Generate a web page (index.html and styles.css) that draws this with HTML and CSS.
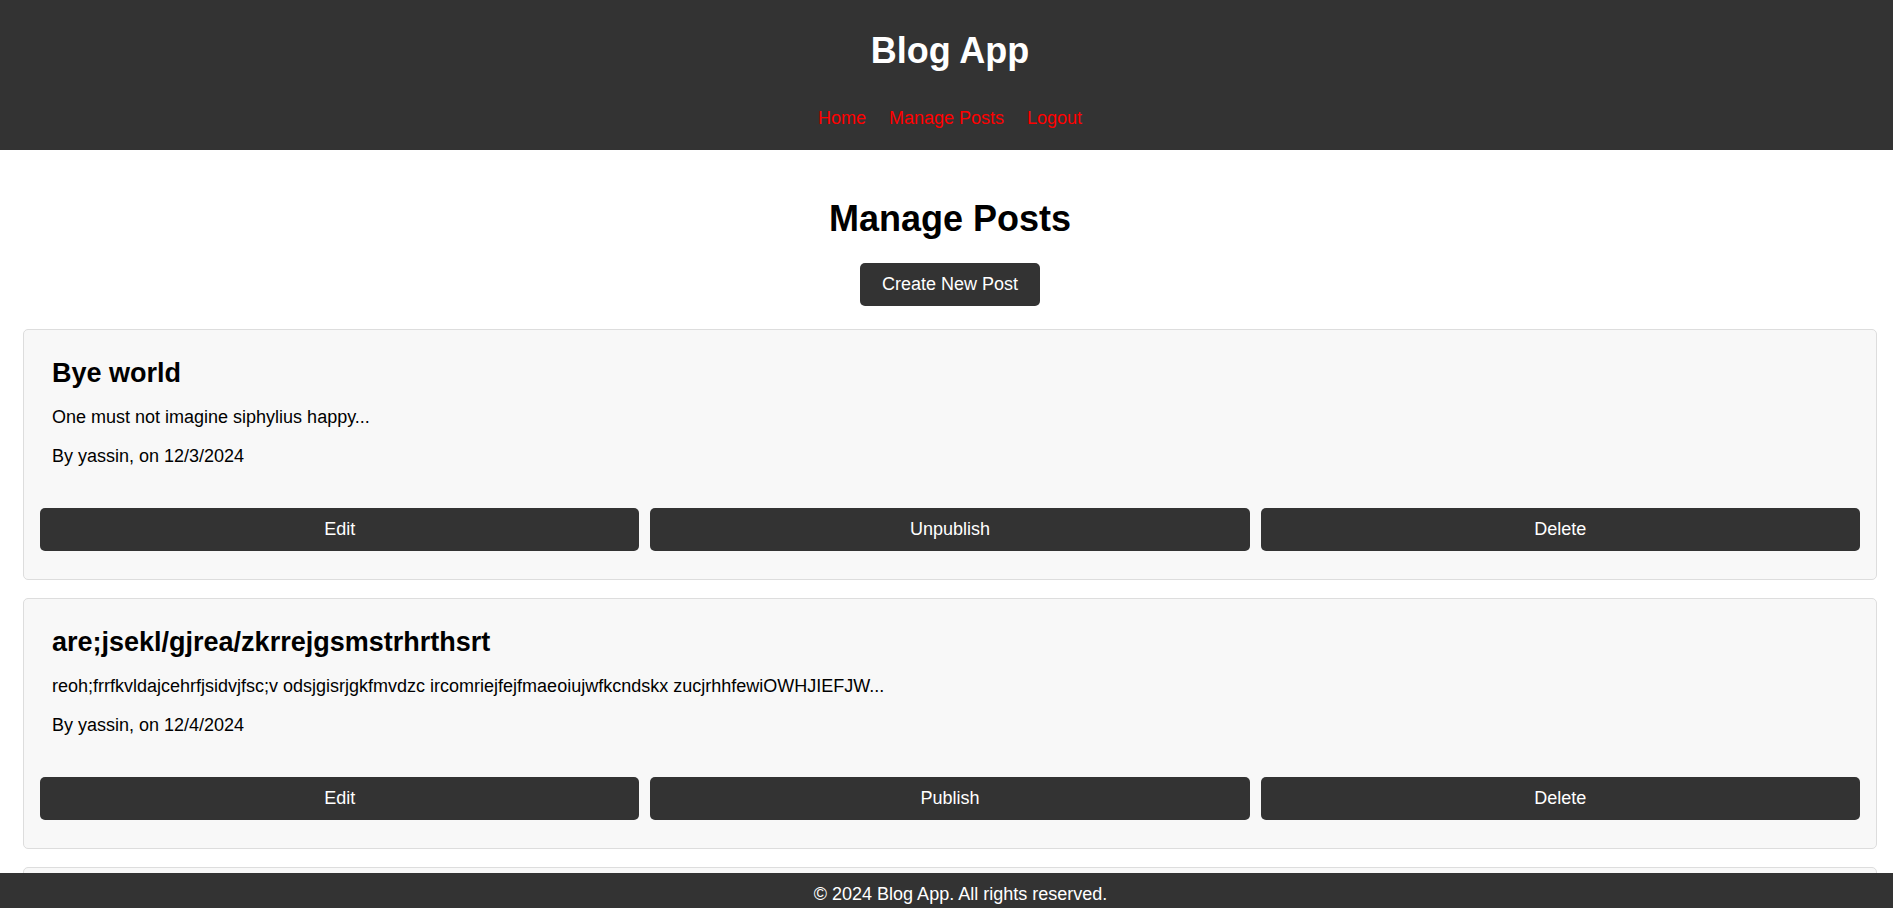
FILE: index.html
```html
<!DOCTYPE html>
<html lang="en">
<head>
<meta charset="utf-8">
<title>Blog App - Manage Posts</title>
<link rel="stylesheet" href="styles.css">
</head>
<body>
<header class="site-header">
  <h1 class="site-title">Blog App</h1>
  <nav class="site-nav">
    <a href="#">Home</a>
    <a href="#">Manage Posts</a>
    <a href="#">Logout</a>
  </nav>
</header>
<main class="page">
  <h1 class="page-title">Manage Posts</h1>
  <div class="create-row"><button class="btn btn-create">Create New Post</button></div>
  <div class="post-list">
    <article class="post-card">
      <div class="post-body">
        <h2 class="post-title">Bye world</h2>
        <p class="post-text">One must not imagine siphylius happy...</p>
        <p class="post-text">By yassin, on 12/3/2024</p>
      </div>
      <div class="post-actions">
        <button class="btn btn-action">Edit</button>
        <button class="btn btn-action">Unpublish</button>
        <button class="btn btn-action">Delete</button>
      </div>
    </article>
    <article class="post-card">
      <div class="post-body">
        <h2 class="post-title">are;jsekl/gjrea/zkrrejgsmstrhrthsrt</h2>
        <p class="post-text">reoh;frrfkvldajcehrfjsidvjfsc;v odsjgisrjgkfmvdzc ircomriejfejfmaeoiujwfkcndskx zucjrhhfewiOWHJIEFJW...</p>
        <p class="post-text">By yassin, on 12/4/2024</p>
      </div>
      <div class="post-actions">
        <button class="btn btn-action">Edit</button>
        <button class="btn btn-action">Publish</button>
        <button class="btn btn-action">Delete</button>
      </div>
    </article>
    <article class="post-card post-card-empty"></article>
  </div>
</main>
<footer class="site-footer">© 2024 Blog App. All rights reserved.</footer>
</body>
</html>
```
FILE: styles.css
```css
html, body {
  margin: 0;
  padding: 0;
}
body {
  font-family: "Liberation Sans", Arial, sans-serif;
  font-size: 18px;
  color: #000;
  background: #fff;
  padding-bottom: 60px;
}
.site-header {
  background: #333333;
  color: #fff;
  height: 150px;
  box-sizing: border-box;
  padding: 30px 0 0 7px;
  text-align: center;
}
.site-title {
  margin: 0;
  font-size: 36px;
  font-weight: bold;
  line-height: 41px;
}
.site-nav {
  margin-top: 37px;
  display: flex;
  justify-content: center;
  gap: 23px;
  line-height: 21px;
}
.site-nav a {
  color: #ff0000;
  text-decoration: none;
}
.page {
  margin: 0 16px 0 23px;
  padding-top: 48px;
}
.page-title {
  margin: 0;
  text-align: center;
  font-size: 36px;
  font-weight: bold;
  line-height: 41px;
}
.create-row {
  display: flex;
  justify-content: center;
  margin: 24px 0 23px;
}
.btn {
  font-family: "Liberation Sans", Arial, sans-serif;
  font-size: 18px;
  color: #fff;
  background: #333333;
  border: none;
  border-radius: 5px;
  cursor: pointer;
}
.btn-create {
  height: 43px;
  padding: 0 22px;
}
.post-list {
  display: flex;
  flex-direction: column;
  gap: 18px;
}
.post-card {
  background: #f8f8f8;
  border: 1px solid #dddddd;
  border-radius: 5px;
  padding: 16px 16px 28px;
}
.post-card-empty {
  min-height: 205px;
}
.post-body {
  padding: 12px 12px 23px;
}
.post-title {
  margin: 0 0 18px;
  font-size: 27px;
  font-weight: bold;
  line-height: 31px;
}
.post-text {
  margin: 18px 0;
  line-height: 21px;
}
.post-actions {
  display: flex;
  gap: 11px;
}
.btn-action {
  flex: 1;
  height: 43px;
}
.site-footer {
  position: fixed;
  left: 0;
  right: 0;
  bottom: 0;
  height: 35px;
  box-sizing: border-box;
  padding: 11px 0 0 28px;
  background: #333333;
  color: #fff;
  text-align: center;
  line-height: 21px;
}
```
